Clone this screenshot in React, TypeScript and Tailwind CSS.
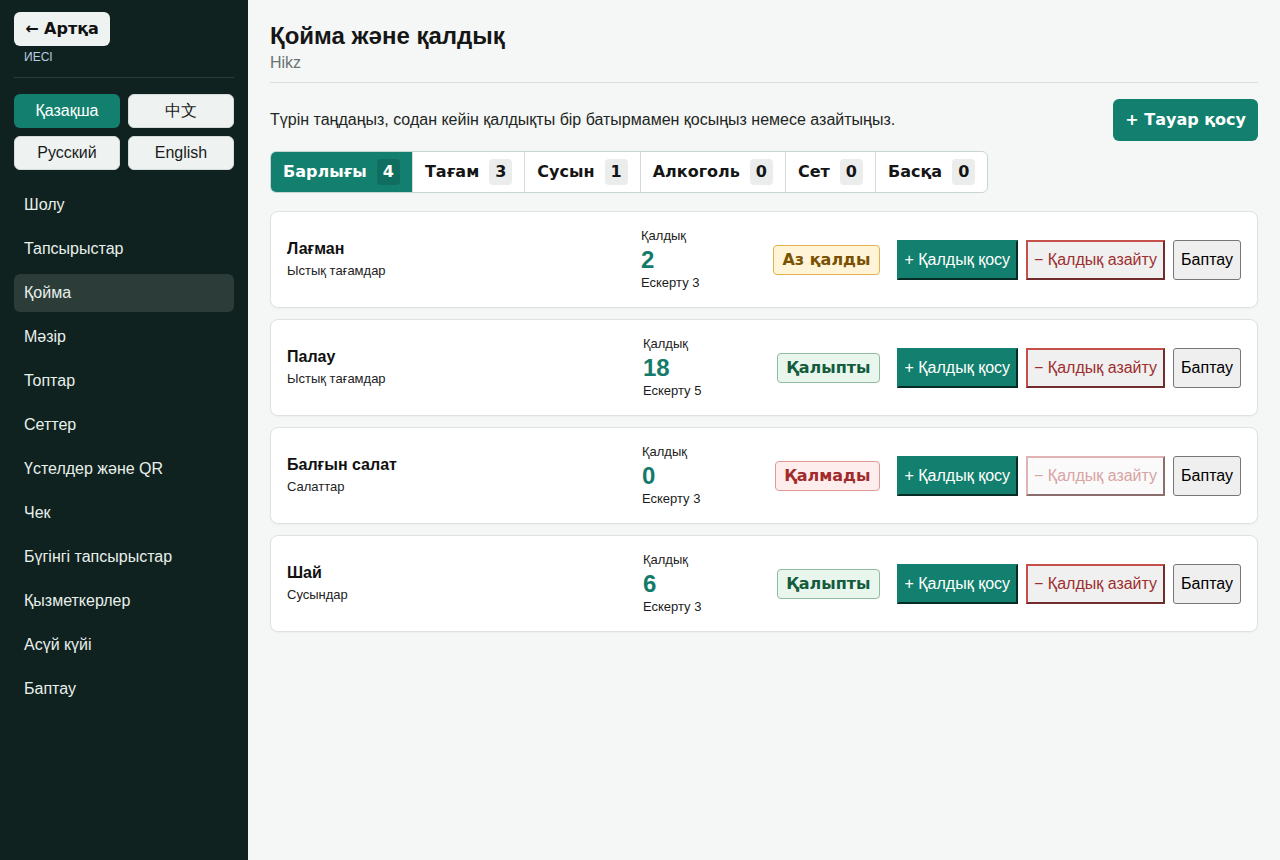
import { useState } from "react";

type Item = {
  name: string;
  group: string;
  qty: number;
  warn: number;
  status: "low" | "ok" | "out";
};

const items: Item[] = [
  { name: "Лағман", group: "Ыстық тағамдар", qty: 2, warn: 3, status: "low" },
  { name: "Палау", group: "Ыстық тағамдар", qty: 18, warn: 5, status: "ok" },
  { name: "Балғын салат", group: "Салаттар", qty: 0, warn: 3, status: "out" },
  { name: "Шай", group: "Сусындар", qty: 6, warn: 3, status: "ok" },
];

const tabs = [
  { label: "Барлығы", count: 4 },
  { label: "Тағам", count: 3 },
  { label: "Сусын", count: 1 },
  { label: "Алкоголь", count: 0 },
  { label: "Сет", count: 0 },
  { label: "Басқа", count: 0 },
];

const nav = [
  "Шолу",
  "Тапсырыстар",
  "Қойма",
  "Мәзір",
  "Топтар",
  "Сеттер",
  "Үстелдер және QR",
  "Чек",
  "Бүгінгі тапсырыстар",
  "Қызметкерлер",
  "Асүй күйі",
  "Баптау",
];

const langs = ["Қазақша", "中文", "Русский", "English"];

const StatusBadge = ({ status }: { status: Item["status"] }) => {
  if (status === "low")
    return (
      <span className="px-[8px] h-[30px] flex items-center rounded border border-[#e2b24e] bg-[#fff4d7] text-[#7a5103] font-bold font-['DejaVu_Sans',sans-serif] text-[16px]">
        Аз қалды
      </span>
    );
  if (status === "out")
    return (
      <span className="px-[8px] h-[30px] flex items-center rounded border border-[#e29a96] bg-[#fdeeed] text-[#a12b2a] font-bold font-['DejaVu_Sans',sans-serif] text-[16px]">
        Қалмады
      </span>
    );
  return (
    <span className="px-[8px] h-[30px] flex items-center rounded border border-[#8fbf9f] bg-[#e9f6ed] text-[#145c3d] font-bold font-['DejaVu_Sans',sans-serif] text-[16px]">
      Қалыпты
    </span>
  );
};

const StockCard = ({ item }: { item: Item }) => {
  const empty = item.qty === 0;
  return (
    <div className="flex items-center gap-4 bg-white border border-[#dce3e1] rounded-lg px-4 py-4 shadow-[0_1px_2px_rgba(0,0,0,0.04)]">
      <div className="w-[280px]">
        <div className="text-base font-bold text-[#111] leading-5">{item.name}</div>
        <div className="text-[13px] text-[#222] leading-[18px] mt-[3px]">{item.group}</div>
      </div>
      <div className="flex-1 flex justify-center">
        <div className="text-[#1c1c1c]">
          <div className="text-[13px] leading-4">Қалдық</div>
          <div className="text-2xl font-bold leading-[31px] text-[#147a6a]">{item.qty}</div>
          <div className="text-[13px] leading-4">Ескерту {item.warn}</div>
        </div>
      </div>
      <StatusBadge status={item.status} />
      <div className="flex items-center gap-2 ml-[1px]">
        <button className="h-10 px-[6px] text-base text-white bg-[#137f6e] border-2 [border-style:outset] border-[#137f6e]">
          + Қалдық қосу
        </button>
        <button
          disabled={empty}
          className={
            "h-10 px-[6px] text-base border-2 [border-style:outset] " +
            (empty
              ? "bg-[#fbfafa] text-[#d8a3a3] border-[#dfb3b3]"
              : "bg-[#f0f0f0] text-[#9d2f2f] border-[#c4504c]")
          }
        >
          − Қалдық азайту
        </button>
        <button className="h-10 px-[7px] text-base text-black bg-[#efefef] border border-[#767676] rounded-[3px]">
          Баптау
        </button>
      </div>
    </div>
  );
};

export default function App() {
  const [lang, setLang] = useState("Қазақша");
  const [tab, setTab] = useState("Барлығы");

  return (
    <div className="flex min-h-[860px] font-['Liberation_Sans',Arial,sans-serif] text-[#1b2624]">
      <aside className="relative w-[248px] shrink-0 bg-[#10221f] px-[14px] pt-[18px]">
        <div className="px-[10px] pb-3 border-b border-[#2b3c39]">
          <div className="text-xl font-bold leading-7 text-white">Hikz</div>
          <div className="text-xs leading-4 mt-[3px] text-[#b9cbe0]">ИЕСІ</div>
        </div>
        <button className="absolute left-[14px] top-[12px] w-[96px] h-[34px] rounded-md bg-[#eef2f0] text-[#111] font-bold text-base font-['DejaVu_Sans',sans-serif]">
          ← Артқа
        </button>

        <div className="grid grid-cols-2 gap-2 mt-4">
          {langs.map((l) => (
            <button
              key={l}
              onClick={() => setLang(l)}
              className={
                "h-[34px] rounded-md text-base " +
                (lang === l
                  ? "bg-[#137f6e] text-white"
                  : "bg-[#eef3f1] text-[#1a1a1a] border border-[#d3dcd9]")
              }
            >
              {l}
            </button>
          ))}
        </div>

        <nav className="flex flex-col gap-[6px] mt-4">
          {nav.map((n) => (
            <div
              key={n}
              className={
                "h-[38px] flex items-center px-[10px] rounded-md text-base text-[#e8f0ec] " +
                (n === "Қойма" ? "bg-[#2c3c39]" : "")
              }
            >
              {n}
            </div>
          ))}
        </nav>
      </aside>

      <main className="flex-1 bg-[#f5f7f6] px-[22px] pt-[21px]">
        <div className="border-b border-[#d6dfdd] pb-[8px]">
          <h1 className="text-2xl font-bold leading-[30px] text-[#161616]">Қойма және қалдық</h1>
          <div className="text-base leading-[22px] mt-[1px] text-[#6b7472]">Hikz</div>
        </div>

        <div className="flex items-center justify-between mt-4">
          <p className="text-base text-[#1d2624]">
            Түрін таңдаңыз, содан кейін қалдықты бір батырмамен қосыңыз немесе азайтыңыз.
          </p>
          <button className="h-[42px] px-[12px] rounded-md bg-[#137f6e] text-white font-bold text-base font-['DejaVu_Sans',sans-serif]">
            + Тауар қосу
          </button>
        </div>

        <div className="flex w-fit mt-[10px] border border-[#c9d5d2] rounded-md bg-white overflow-hidden">
          {tabs.map((t, i) => {
            const active = tab === t.label;
            return (
              <button
                key={t.label}
                onClick={() => setTab(t.label)}
                className={
                  "h-10 flex items-center gap-[10px] px-[12px] font-bold text-base font-['DejaVu_Sans',sans-serif] " +
                  (i > 0 ? "border-l border-[#d3dcda] " : "") +
                  (active ? "bg-[#137f6e] text-white" : "text-[#151515]")
                }
              >
                {t.label}
                <span
                  className={
                    "h-[26px] min-w-[22px] px-[6px] flex items-center justify-center rounded " +
                    (active ? "bg-[#0f6e5f]" : "bg-[#ebedec]")
                  }
                >
                  {t.count}
                </span>
              </button>
            );
          })}
        </div>

        <div className="flex flex-col gap-[11px] mt-[18px]">
          {items.map((it) => (
            <StockCard key={it.name} item={it} />
          ))}
        </div>
      </main>
    </div>
  );
}
